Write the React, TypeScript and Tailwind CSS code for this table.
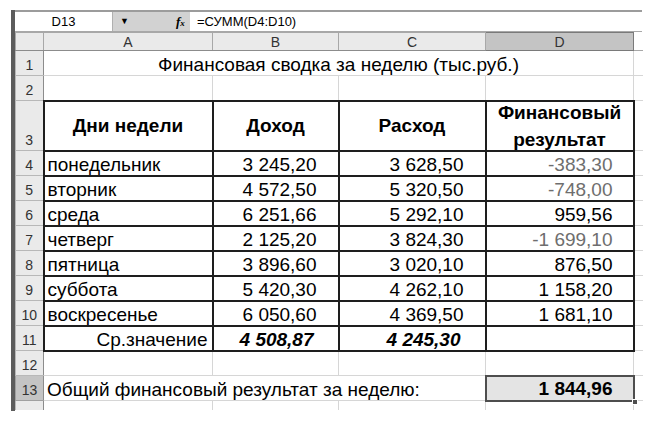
import React from "react";

type Row = { n: number; day: string; inc: string; exp: string; res: string };

const rows: Row[] = [
  { n: 4, day: "понедельник", inc: "3 245,20", exp: "3 628,50", res: "-383,30" },
  { n: 5, day: "вторник", inc: "4 572,50", exp: "5 320,50", res: "-748,00" },
  { n: 6, day: "среда", inc: "6 251,66", exp: "5 292,10", res: "959,56" },
  { n: 7, day: "четверг", inc: "2 125,20", exp: "3 824,30", res: "-1 699,10" },
  { n: 8, day: "пятница", inc: "3 896,60", exp: "3 020,10", res: "876,50" },
  { n: 9, day: "суббота", inc: "5 420,30", exp: "4 262,10", res: "1 158,20" },
  { n: 10, day: "воскресенье", inc: "6 050,60", exp: "4 369,50", res: "1 681,10" },
];

const rowHead =
  "p-0 border border-[#b8b8b8] border-r-[#8c8c8c] bg-[#eaeaea] text-[14px] font-normal text-[#333] text-center align-bottom leading-none pb-[3px]";
const rowHeadSel =
  "p-0 border border-[#a0a0a0] border-r-[#8c8c8c] bg-[#c4c4c4] text-[14px] text-[#333] text-center align-bottom leading-none pb-[3px]";
const light = "p-0 border border-[#d6d6d6] leading-[21px]";
const dark = "p-0 border-2 border-[#1e1e1e] leading-[21px]";
const edge = "p-0 border-y border-[#d6d6d6]";
const colHead = "p-0 border border-[#a8a8a8] border-b-[#8c8c8c] bg-[#eaeaea] text-center leading-none";

export default function App() {
  return (
    <div className="w-[654px] h-[421px] bg-white overflow-hidden font-['Liberation_Sans',Arial,sans-serif] text-black">
      <div className="flex pt-[10px] pl-[11px]">
        <div className="w-[4px] h-[401px] bg-[#5c5c5c]" />
        <div className="w-[627px] border-t-2 border-[#9c9c9c]">
          {/* formula bar */}
          <div className="flex h-[20px] items-center border-b border-[#a8a8a8] text-[13px]">
            <div className="w-[98px] h-full flex items-center justify-center border-r border-[#b0b0b0] bg-white">
              D13
            </div>
            <div className="w-[77px] h-full flex items-center bg-[#d2d2d2]">
              <span className="ml-[7px] text-[9px] leading-none">▼</span>
              <span className="ml-[47px] font-['Liberation_Serif',serif] italic font-bold text-[13px] leading-none">
                f<span className="text-[9px]">x</span>
              </span>
            </div>
            <div className="flex-1 h-full flex items-center pl-[7px] bg-white">=СУММ(D4:D10)</div>
          </div>

          {/* sheet */}
          <table className="table-fixed border-collapse w-[627px] text-[19px]">
            <colgroup>
              <col className="w-[28px]" />
              <col className="w-[169px]" />
              <col className="w-[126px]" />
              <col className="w-[147px]" />
              <col className="w-[148px]" />
              <col className="w-[9px]" />
            </colgroup>
            <tbody>
              <tr className="h-[18px] text-[14px] text-[#333]">
                <td className={colHead} />
                <td className={colHead}>A</td>
                <td className={colHead}>B</td>
                <td className={colHead}>C</td>
                <td className="p-0 border border-[#7a7a7a] bg-[#c4c4c4] text-center leading-none">D</td>
                <td className="p-0 border-b border-[#a8a8a8]" />
              </tr>

              <tr className="h-[25px]">
                <td className={rowHead}>1</td>
                <td colSpan={4} className={`${light} text-center align-bottom`}>
                  Финансовая сводка за неделю (тыс.руб.)
                </td>
                <td className={edge} />
              </tr>

              <tr className="h-[25px]">
                <td className={rowHead}>2</td>
                <td className={light} />
                <td className={light} />
                <td className={light} />
                <td className={light} />
                <td className={edge} />
              </tr>

              <tr className="h-[50px]">
                <td className={rowHead}>3</td>
                <td className={`${dark} text-center font-bold`}>Дни недели</td>
                <td className={`${dark} text-center font-bold`}>Доход</td>
                <td className={`${dark} text-center font-bold`}>Расход</td>
                <td className="p-0 border-2 border-[#1e1e1e] text-center font-bold">
                  <div className="leading-[27px] -my-[4px]">
                    Финансовый
                    <br />
                    результат
                  </div>
                </td>
                <td className={edge} />
              </tr>

              {rows.map((r) => (
                <tr key={r.n} className="h-[25px]">
                  <td className={rowHead}>{r.n}</td>
                  <td className={`${dark} align-bottom pl-[3px]`}>{r.day}</td>
                  <td className={`${dark} align-bottom text-right pr-[21px]`}>{r.inc}</td>
                  <td className={`${dark} align-bottom text-right pr-[21px]`}>{r.exp}</td>
                  <td
                    className={`${dark} align-bottom text-right pr-[20px] ${
                      r.res.startsWith("-") ? "text-[#6e6e6e]" : "text-black"
                    }`}
                  >
                    {r.res}
                  </td>
                  <td className={edge} />
                </tr>
              ))}

              <tr className="h-[25px]">
                <td className={rowHead}>11</td>
                <td className={`${dark} align-bottom text-right pr-[4px]`}>Ср.значение</td>
                <td className={`${dark} align-bottom text-right pr-[24px] font-bold italic`}>4 508,87</td>
                <td className={`${dark} align-bottom text-right pr-[24px] font-bold italic`}>4 245,30</td>
                <td className={dark} />
                <td className={edge} />
              </tr>

              <tr className="h-[25px]">
                <td className={rowHead}>12</td>
                <td className={light} />
                <td className={light} />
                <td className={light} />
                <td className={light} />
                <td className={edge} />
              </tr>

              <tr className="h-[25px]">
                <td className={rowHeadSel}>13</td>
                <td colSpan={3} className={`${light} align-bottom pl-[3px] whitespace-nowrap`}>
                  Общий финансовый результат за неделю:
                </td>
                <td className="p-0 border-2 border-[#4e4e4e] bg-[#e4e4e4] align-bottom">
                  <div className="relative h-[22px] text-right pr-[20px] font-bold leading-[22px]">
                    1 844,96
                    <span className="absolute right-[-5px] bottom-[-5px] w-[6px] h-[6px] bg-[#4e4e4e] border border-white" />
                  </div>
                </td>
                <td className={edge} />
              </tr>

              <tr className="h-[9px]">
                <td className="p-0 border-x border-t border-[#b8b8b8] border-r-[#8c8c8c] bg-[#eaeaea]" />
                <td className="p-0 border-x border-t border-[#d6d6d6]" />
                <td className="p-0 border-x border-t border-[#d6d6d6]" />
                <td className="p-0 border-x border-t border-[#d6d6d6]" />
                <td className="p-0 border-x border-t border-[#d6d6d6]" />
                <td className="p-0 border-t border-[#d6d6d6]" />
              </tr>
            </tbody>
          </table>
        </div>
      </div>
    </div>
  );
}
